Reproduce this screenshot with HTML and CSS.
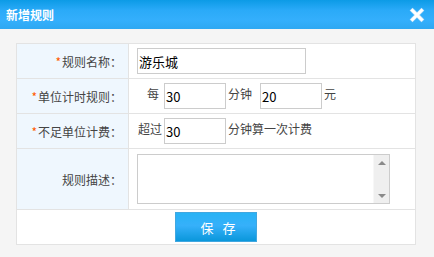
FILE: index.html
```html
<!DOCTYPE html>
<html lang="zh">
<head>
<meta charset="utf-8">
<title>新增规则</title>
<link rel="stylesheet" href="styles.css">
</head>
<body>
<div class="dialog">
  <div class="dialog-header">
    <span class="dialog-title">新增规则</span>
    <span class="dialog-close" aria-label="关闭">
      <svg width="16" height="16" viewBox="0 0 16 16">
        <path d="M3.5 3.5 L12.5 12.5 M12.5 3.5 L3.5 12.5" stroke="#bfe0f8" stroke-width="4" stroke-linecap="square" fill="none"/>
        <path d="M3.5 3.5 L12.5 12.5 M12.5 3.5 L3.5 12.5" stroke="#ffffff" stroke-width="2.8" stroke-linecap="square" fill="none"/>
      </svg>
    </span>
  </div>
  <div class="dialog-body">
    <table class="form-table">
      <tr class="row">
        <th class="label"><span class="req">*</span>规则名称：</th>
        <td class="field"><input class="input input-name" type="text" value="游乐城"></td>
      </tr>
      <tr class="row">
        <th class="label"><span class="req">*</span>单位计时规则：</th>
        <td class="field"><span class="prefix prefix-indent">每</span><input class="input input-num" type="text" value="30"><span class="unit">分钟</span><input class="input input-num" type="text" value="20"><span class="unit">元</span></td>
      </tr>
      <tr class="row">
        <th class="label"><span class="req">*</span>不足单位计费：</th>
        <td class="field"><span class="prefix">超过</span><input class="input input-num" type="text" value="30"><span class="unit">分钟算一次计费</span></td>
      </tr>
      <tr class="row row-tall">
        <th class="label">规则描述：</th>
        <td class="field">
          <div class="textarea-box">
            <textarea class="textarea"></textarea>
            <div class="scrollbar">
              <span class="arrow arrow-up"></span>
              <span class="arrow arrow-down"></span>
            </div>
          </div>
        </td>
      </tr>
      <tr class="row">
        <td class="actions" colspan="2"><button class="btn-save" type="button">保&nbsp;存</button></td>
      </tr>
    </table>
  </div>
</div>
</body>
</html>
```
FILE: styles.css
```css
html, body {
  margin: 0;
  padding: 0;
}
body {
  background: #f5f5f5;
  font-family: "Noto Sans CJK SC", "Liberation Sans", sans-serif;
  font-size: 12px;
  color: #444;
  width: 434px;
  height: 257px;
  overflow: hidden;
}
.dialog {
  width: 434px;
}
.dialog-header {
  height: 29px;
  background: linear-gradient(to bottom, #0c9be6 0%, #2aaaf8 35%, #34affc 70%, #2ea8f2 100%);
  display: flex;
  align-items: center;
  justify-content: space-between;
  padding: 0 9px 0 6px;
}
.dialog-title {
  color: #fff;
  font-weight: bold;
  font-size: 12px;
  line-height: 29px;
}
.dialog-close {
  display: flex;
  width: 16px;
  height: 16px;
}
.dialog-body {
  padding: 14px 0 0 16px;
}
.form-table {
  border-collapse: collapse;
  width: 400px;
  background: #fff;
}
.form-table th, .form-table td {
  border: 1px solid #e3e3e3;
  padding: 0;
}
.row {
  height: 35px;
}
.row-tall {
  height: 61px;
}
.label {
  width: 105px;
  background: #eff7fe;
  text-align: right;
  font-weight: normal;
  color: #444;
  font-size: 12px;
  padding-right: 6px !important;
  white-space: nowrap;
}
.req {
  color: #ff5a00;
  margin-right: 1px;
}
.field {
  padding-left: 8px !important;
  color: #444;
  font-size: 12px;
  white-space: nowrap;
}
.input {
  box-sizing: border-box;
  height: 26px;
  border: 1px solid #cccccc;
  font-family: "Noto Sans CJK SC", "Liberation Sans", sans-serif;
  font-size: 13px;
  color: #000;
  padding: 0 1px;
  vertical-align: middle;
  outline: none;
}
.input-name {
  width: 169px;
}
.input-num {
  width: 62px;
}
.prefix {
  margin-left: 1px;
  margin-right: 2px;
}
.prefix-indent {
  margin-left: 10px;
  margin-right: 5px;
}
.unit {
  margin-left: 2px;
  margin-right: 8px;
}
.textarea-box {
  box-sizing: border-box;
  display: flex;
  width: 253px;
  height: 50px;
  border: 1px solid #cccccc;
  background: #fff;
}
.textarea {
  flex: 1;
  border: 0;
  margin: 0;
  padding: 2px;
  resize: none;
  outline: none;
  font-family: "Noto Sans CJK SC", "Liberation Sans", sans-serif;
  font-size: 12px;
}
.scrollbar {
  width: 16px;
  background: #efefef;
  border-left: 1px solid #f7f7f7;
  display: flex;
  flex-direction: column;
  justify-content: space-between;
  align-items: center;
  padding: 6px 0 5px;
  box-sizing: border-box;
}
.arrow {
  width: 0;
  height: 0;
  border-left: 4px solid transparent;
  border-right: 4px solid transparent;
}
.arrow-up {
  border-bottom: 4px solid #8a8a8a;
}
.arrow-down {
  border-top: 4px solid #8a8a8a;
}
.actions {
  text-align: center;
}
.btn-save {
  width: 82px;
  height: 30px;
  border: 1px solid #41a7e0;
  background: linear-gradient(to bottom, #28b3f5 0%, #36b0fa 45%, #0a97db 100%);
  color: #fff;
  font-family: "Noto Sans CJK SC", "Liberation Sans", sans-serif;
  font-size: 13px;
  letter-spacing: 3px;
  padding: 0 0 0 7px;
  vertical-align: middle;
}
```
